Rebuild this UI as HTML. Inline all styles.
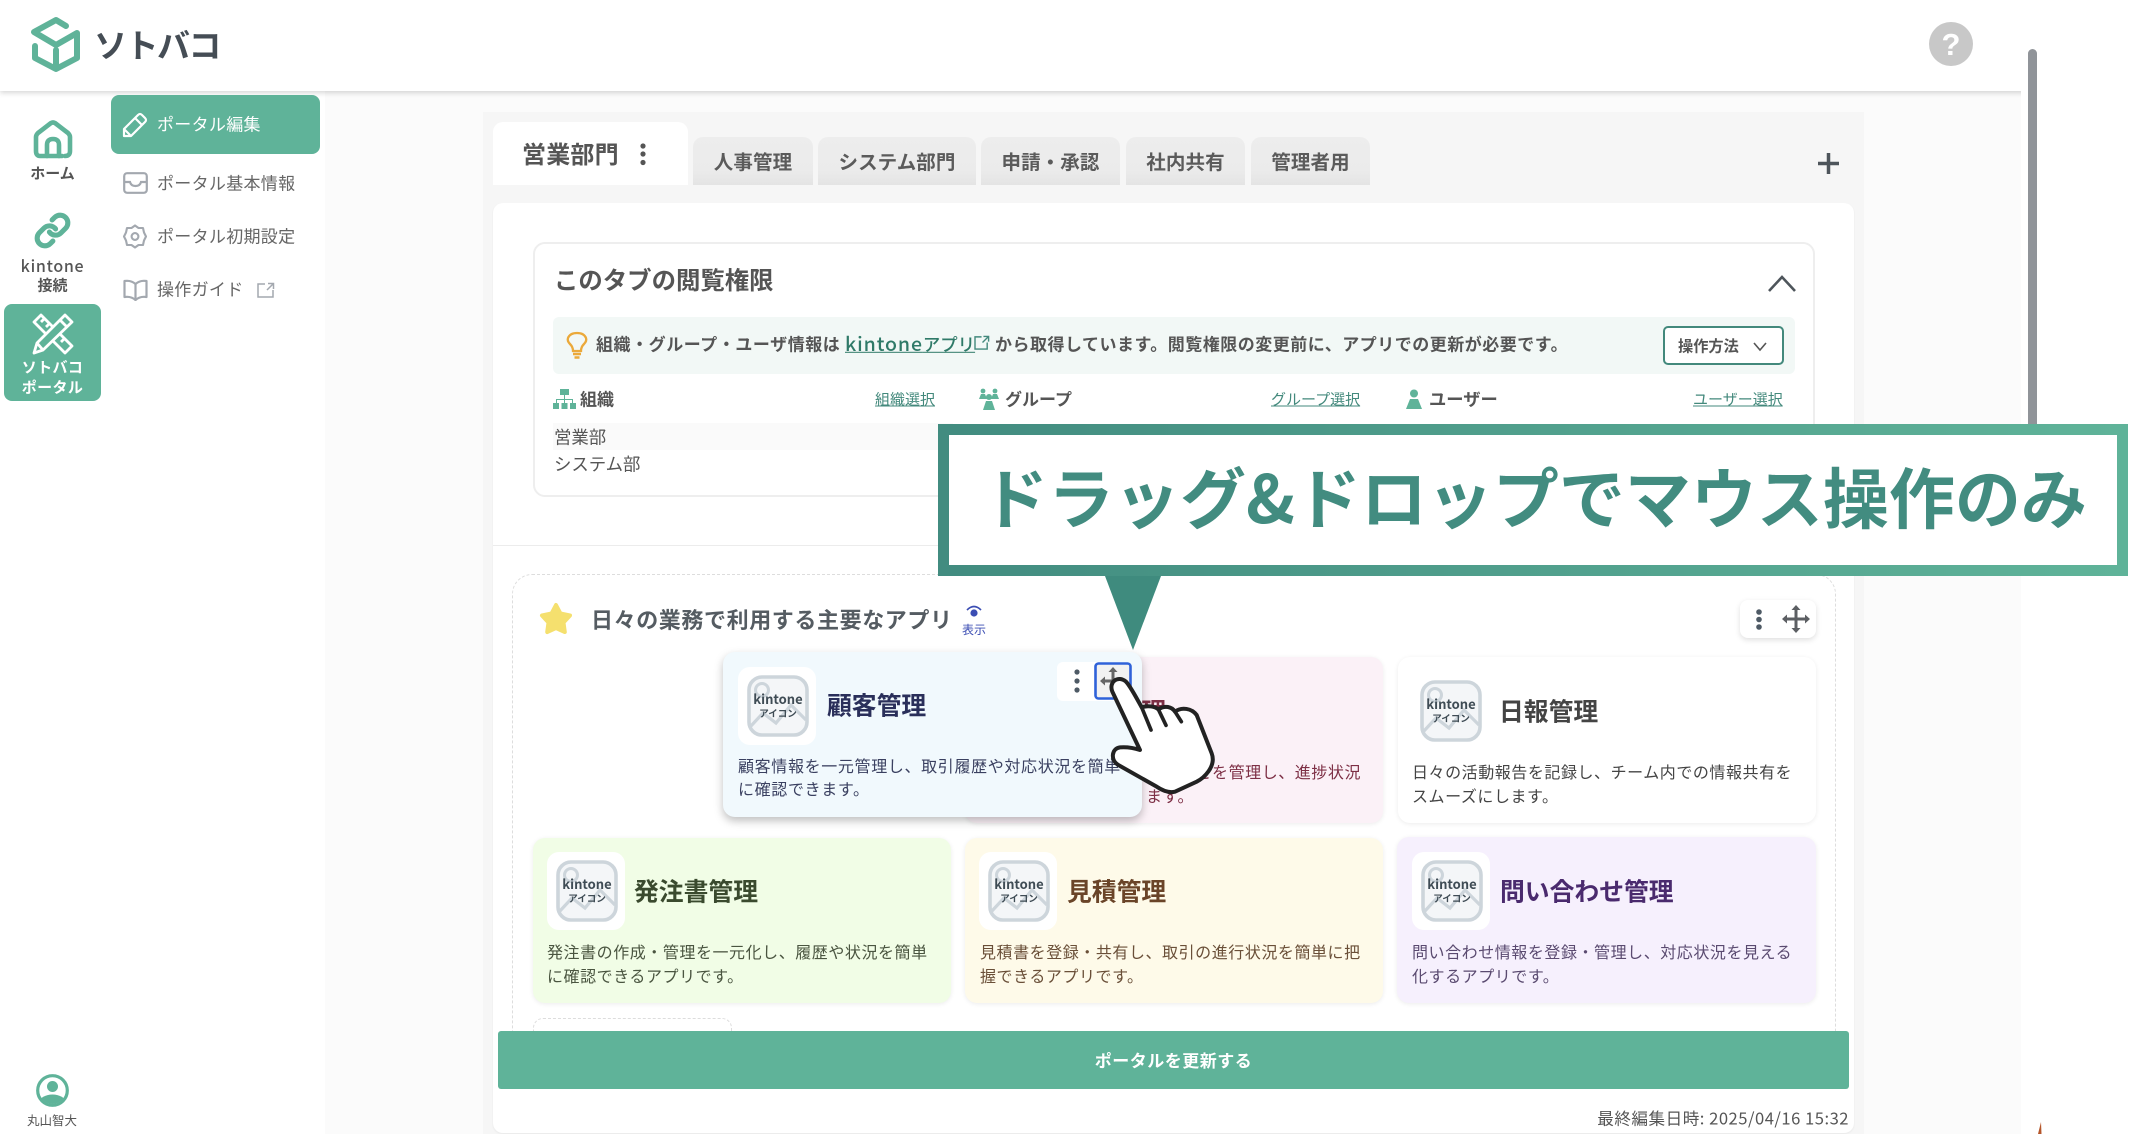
<!DOCTYPE html>
<html lang="ja">
<head>
<meta charset="utf-8">
<title>ソトバコポータル</title>
<style>
html,body{margin:0;padding:0;background:#fff}
body{width:2144px;height:1134px;overflow:hidden;position:relative;font-family:"Noto Sans CJK JP","Liberation Sans",sans-serif;color:#555}
.a{position:absolute;white-space:nowrap}
.t{position:absolute;white-space:nowrap;line-height:1;transform:translateY(-50%)}
.b{font-weight:700}
.tab{position:absolute;top:137px;height:48px;background:linear-gradient(#ededed,#ebebeb 70%,#e4e4e4);border-radius:10px 10px 0 0;font-size:19.5px;font-weight:700;color:#5b5b5b;text-align:center;line-height:48px;letter-spacing:.1px}
.card{position:absolute;border-radius:12px;box-shadow:0 1px 5px rgba(0,0,0,.08)}
.ib{position:absolute;width:78px;height:78px;background:#fff;border-radius:12px}
.ib svg{position:absolute;left:9px;top:8px;width:62px;height:62px}
.ttl{position:absolute;white-space:nowrap;line-height:1;font-size:24.8px;font-weight:700;transform:translateY(-50%)}
.d{position:absolute;white-space:nowrap;font-size:16px;letter-spacing:.55px;line-height:1;transform:translateY(-50%)}
.lnk{position:absolute;white-space:nowrap;line-height:1;transform:translateY(-50%);font-size:15px;color:#43897c;text-decoration:underline}
.menu{position:absolute;left:158px;white-space:nowrap;font-size:17px;line-height:1;color:#666;letter-spacing:.3px;transform:translateY(-50%)}
.navt{position:absolute;left:0;width:105px;text-align:center;font-size:15px;font-weight:700;line-height:1;color:#555;transform:translateY(-50%);white-space:nowrap}
</style>
</head>
<body>
<!-- backgrounds -->
<div class="a" style="left:325px;top:90px;width:1696px;height:1044px;background:#fbfbfb"></div>
<div class="a" style="left:483px;top:112px;width:1381px;height:1022px;background:#f6f6f6"></div>
<div class="a" style="left:493px;top:203px;width:1361px;height:930px;background:#fff;border-radius:10px;box-shadow:0 1px 2px rgba(0,0,0,.06)"></div>

<!-- header -->
<div class="a" style="left:0;top:0;width:2036px;height:91px;background:#fff;box-shadow:0 2px 5px rgba(0,0,0,.16);clip-path:inset(0 15px -12px 0)"></div>
<svg class="a" style="left:28px;top:12px" width="60" height="64" viewBox="28 12 60 64" fill="none" stroke="#5fb399" stroke-width="6" stroke-linejoin="round" stroke-linecap="round">
<path d="M66 26 56 20 34 32 56 45 77 33V58L56 69 35 58V46"/><path d="M56 50V67"/>
</svg>
<div class="t b" style="left:94px;top:44px;font-size:33px;color:#454d55;letter-spacing:-1.5px">ソトバコ</div>
<svg class="a" style="left:1929px;top:22px" width="44" height="44" viewBox="0 0 44 44"><circle cx="22" cy="22" r="22" fill="#c8c8c8"/><text x="22" y="33" font-family="'Liberation Sans',sans-serif" font-weight="700" font-size="31" text-anchor="middle" fill="#fff">?</text></svg>

<!-- scrollbar -->
<div class="a" style="left:2028px;top:49px;width:9px;height:390px;background:#909499;border-radius:5px 5px 0 0"></div>
<svg class="a" style="left:2036px;top:1122px" width="8" height="12"><path d="M2 12 3.5 6 5 0 5.5 12Z" fill="#b5562a"/></svg>

<!-- left rail -->
<svg class="a" style="left:32px;top:120px" width="42" height="40" viewBox="0 0 42 40" fill="none" stroke="#5fb399" stroke-width="4.6" stroke-linecap="round" stroke-linejoin="round">
<path d="M30 36H8Q4 36 4 31V17Q4 15 6 13L19 3Q21 2 23 3L36 13Q38 15 38 17V31Q38 36 33 36"/><path d="M15 36V25Q15 19 21 19 27 19 27 25V36"/>
</svg>
<div class="navt" style="top:173px">ホーム</div>
<svg class="a" style="left:34px;top:212px" width="37" height="37" viewBox="0 0 24 24" fill="none" stroke="#5fb399" stroke-width="3.3" stroke-linecap="round" stroke-linejoin="round">
<path d="M10 13a5 5 0 0 0 7.54.54l3-3a5 5 0 0 0-7.07-7.07l-1.72 1.71"/><path d="M14 11a5 5 0 0 0-7.54-.54l-3 3a5 5 0 0 0 7.07 7.07l1.71-1.71"/>
</svg>
<div class="navt" style="top:265px;font-size:16px;letter-spacing:.7px;font-weight:500">kintone</div>
<div class="navt" style="top:285px">接続</div>
<div class="a" style="left:4px;top:304px;width:97px;height:97px;background:#5fb399;border-radius:8px"></div>
<svg class="a" style="left:31px;top:313px" width="44" height="42" viewBox="0 0 44 42" fill="none" stroke="#fff" stroke-width="2.8" stroke-linejoin="round">
<path d="M3 9 10 2 41 33 34 40Z"/><path d="M10 9 14 5M15 14 19 10M25 24 29 20M30 29 34 25"/>
<path d="M34 2 41 9 12 37 3 40 6 30Z" fill="#5fb399"/><path d="M29 7 36 14M6 30 12 37"/>
</svg>
<div class="navt" style="top:367px;color:#fff;letter-spacing:.4px">ソトバコ</div>
<div class="navt" style="top:387px;color:#fff;letter-spacing:.4px">ポータル</div>
<svg class="a" style="left:36px;top:1074px" width="33" height="33" viewBox="0 0 33 33"><defs><clipPath id="uc"><circle cx="16.5" cy="16.5" r="13.5"/></clipPath></defs><circle cx="16.5" cy="16.5" r="14.8" fill="#fff" stroke="#5fb399" stroke-width="3.2"/><circle cx="16.5" cy="12.5" r="5.5" fill="#5fb399"/><ellipse cx="16.5" cy="28" rx="13" ry="7.5" fill="#5fb399" clip-path="url(#uc)"/></svg>
<div class="t" style="left:27px;top:1120px;font-size:12.5px;color:#555">丸山智大</div>

<!-- menu -->
<div class="a" style="left:111px;top:95px;width:209px;height:59px;background:#5fb399;border-radius:8px"></div>
<svg class="a" style="left:122px;top:112px" width="26" height="26" viewBox="0 0 26 26" fill="none" stroke="#fff" stroke-width="2.2" stroke-linejoin="round"><path d="M2 24V17L16 3Q18 1 20 3L23 6Q25 8 23 10L9 24Z"/><path d="M13 6 20 13M9 24 2 17"/></svg>
<div class="menu" style="top:122.5px;left:157px;color:#fff">ポータル編集</div>
<svg class="a" style="left:123px;top:172px" width="25" height="22" viewBox="0 0 25 22" fill="none" stroke="#a3a8af" stroke-width="2.2"><rect x="1.2" y="1.2" width="22.6" height="19.6" rx="3"/><path d="M1.2 10H7Q8 14 12.5 14 17 14 18 10H23.8"/></svg>
<div class="menu" style="top:181.5px;left:157px">ポータル基本情報</div>
<svg class="a" style="left:123px;top:224px" width="24" height="25" viewBox="0 0 24 25" fill="none" stroke="#a3a8af" stroke-width="2.1"><path d="M12 1.5 15.5 4 20 4 21 8.5 23 12.5 21 16.5 20 21 15.5 21 12 23.5 8.5 21 4 21 3 16.5 1 12.5 3 8.5 4 4 8.5 4Z" stroke-linejoin="round"/><circle cx="12" cy="12.5" r="3.4"/></svg>
<div class="menu" style="top:235px;left:157px">ポータル初期設定</div>
<svg class="a" style="left:123px;top:279px" width="25" height="22" viewBox="0 0 25 22" fill="none" stroke="#a3a8af" stroke-width="2.2" stroke-linejoin="round"><path d="M12.5 5Q8 1 1.5 2V18Q8 17 12.5 21 17 17 23.5 18V2Q17 1 12.5 5ZM12.5 5V21"/></svg>
<div class="menu" style="top:288px;left:157px">操作ガイド</div>
<svg class="a" style="left:257px;top:282px" width="18" height="16" viewBox="0 0 18 16" fill="none" stroke="#a3a8af" stroke-width="1.5"><path d="M8 2H1V15H16V8M10 8 16 2M11 1.5H16.5V7"/></svg>

<!-- tabs -->
<div class="a" style="left:493px;top:122px;width:195px;height:63px;background:#fff;border-radius:10px 10px 0 0"></div>
<div class="t b" style="left:522px;top:153px;font-size:24px;color:#555;letter-spacing:.2px">営業部門</div>
<svg class="a" style="left:639px;top:142px" width="8" height="24"><circle cx="4" cy="4" r="2.6" fill="#555"/><circle cx="4" cy="12" r="2.6" fill="#555"/><circle cx="4" cy="20.5" r="2.6" fill="#555"/></svg>
<div class="tab" style="left:693px;width:120px">人事管理</div>
<div class="tab" style="left:818px;width:158px">システム部門</div>
<div class="tab" style="left:981px;width:139px">申請・承認</div>
<div class="tab" style="left:1126px;width:119px">社内共有</div>
<div class="tab" style="left:1251px;width:119px">管理者用</div>
<svg class="a" style="left:1818px;top:153px" width="21" height="21"><path d="M10.5 0V21M0 10.5H21" stroke="#4e555b" stroke-width="3.5"/></svg>

<!-- permission card -->
<div class="a" style="left:533px;top:242px;width:1282px;height:255px;box-sizing:border-box;border:2px solid #eee;border-radius:12px;background:#fff"></div>
<div class="t b" style="left:554px;top:280px;font-size:24.4px;color:#555">このタブの閲覧権限</div>
<svg class="a" style="left:1767px;top:274px" width="30" height="19" fill="none" stroke="#4e555b" stroke-width="2.6"><path d="M2 17 15 3 28 17"/></svg>
<div class="a" style="left:553px;top:317px;width:1242px;height:57px;background:#f2f8f6;border-radius:6px"></div>
<svg class="a" style="left:565px;top:331px" width="24" height="28" viewBox="0 0 24 28" fill="none" stroke="#eba93a" stroke-width="2.3"><path d="M8 20Q8 16 5 13 2 10 3 7 5 2 12 2 19 2 21 7 22 10 19 13 16 16 16 20Z"/><path d="M8 23H16M9.5 26.5H14.5" stroke-width="2.6"/></svg>
<div class="t b" style="left:596px;top:343px;font-size:17px;color:#555;letter-spacing:.55px">組織・グループ・ユーザ情報は</div>
<div class="t" style="left:845px;top:343px;color:#2f7a68;text-decoration:underline;font-weight:500;font-size:17.4px"><span style="font-size:19.5px;letter-spacing:.9px">kintone</span>アプリ</div>
<svg class="a" style="left:974px;top:335px" width="17" height="15" viewBox="0 0 18 16" fill="none" stroke="#43897c" stroke-width="1.5"><path d="M8 2H1V15H14V8M9 8 15 2M10 1.5H15.5V7"/></svg>
<div class="t b" style="left:995px;top:343px;font-size:17px;color:#555;letter-spacing:.5px">から取得しています。閲覧権限の変更前に、アプリでの更新が必要です。</div>
<div class="a" style="left:1663px;top:326px;width:121px;height:39px;box-sizing:border-box;border:2px solid #43897c;border-radius:5px;background:#fff"></div>
<div class="t b" style="left:1678px;top:346px;font-size:15.2px;color:#555">操作方法</div>
<svg class="a" style="left:1752px;top:341px" width="16" height="11" fill="none" stroke="#555" stroke-width="1.6"><path d="M2 2 8 9 14 2"/></svg>

<svg class="a" style="left:553px;top:389px" width="23" height="21" viewBox="0 0 23 21" fill="#5fb399"><rect x="7" y="0" width="9" height="6"/><rect x="0" y="14" width="6" height="6"/><rect x="8.5" y="14" width="6" height="6"/><rect x="17" y="14" width="6" height="6"/><path d="M11 6h1v4h8v4h-1v-3h-7v3h-1v-3H4v3H3v-4h8z"/></svg>
<div class="t b" style="left:580px;top:398px;font-size:17px;color:#555">組織</div>
<div class="lnk" style="left:875px;top:399px">組織選択</div>
<svg class="a" style="left:978px;top:388px" width="22" height="22" viewBox="0 0 22 22" fill="#5fb399"><circle cx="5" cy="3" r="2.4"/><circle cx="17" cy="3" r="2.4"/><path d="M3 6h4l2 5H1ZM15 6h4l2 5h-8Z"/><circle cx="11" cy="9" r="3"/><path d="M8 13h6l3 9H5Z"/></svg>
<div class="t b" style="left:1005px;top:398px;font-size:17px;color:#555">グループ</div>
<div class="lnk" style="left:1271px;top:399px">グループ選択</div>
<svg class="a" style="left:1405px;top:389px" width="18" height="20" viewBox="0 0 18 20" fill="#5fb399"><circle cx="9" cy="4.5" r="4"/><path d="M5 10h8l4 10H1Z"/></svg>
<div class="t b" style="left:1429px;top:398px;font-size:17.3px;color:#555">ユーザー</div>
<div class="lnk" style="left:1693px;top:399px">ユーザー選択</div>
<div class="a" style="left:553px;top:423px;width:400px;height:27px;background:#fafafa"></div>
<div class="t" style="left:554px;top:437px;font-size:17.4px;color:#555">営業部</div>
<div class="t" style="left:554px;top:463.5px;font-size:17.4px;color:#555">システム部</div>

<div class="a" style="left:493px;top:545px;width:1361px;height:1px;background:#ececec"></div>

<!-- section -->
<div class="a" style="left:512px;top:574px;width:1324px;height:470px;box-sizing:border-box;border:1.5px dashed #ddd;border-bottom:0;border-radius:20px 20px 0 0"></div>
<svg class="a" style="left:539px;top:602px" width="34" height="33" viewBox="0 0 34 33"><path d="M17 3 21.5 11.5 31 13.5 24.5 20.5 25.8 30 17 26 8.2 30 9.5 20.5 3 13.5 12.5 11.5Z" fill="#f5e06e" stroke="#f5e06e" stroke-width="4" stroke-linejoin="round"/></svg>
<div class="t b" style="left:591px;top:619px;font-size:22px;color:#555c62;letter-spacing:.6px">日々の業務で利用する主要なアプリ</div>
<svg class="a" style="left:965px;top:604px" width="18" height="14" viewBox="0 0 18 14" fill="#3b4db3"><circle cx="9" cy="9" r="3.6"/><path d="M2 6Q9 -1 16 6" fill="none" stroke="#3b4db3" stroke-width="1.7"/></svg>
<div class="t" style="left:962px;top:630px;font-size:12px;color:#3b4db3">表示</div>
<div class="a" style="left:1740px;top:600px;width:76px;height:38px;background:#fff;border-radius:8px;box-shadow:0 2px 6px rgba(0,0,0,.13)"></div>
<svg class="a" style="left:1740px;top:600px" width="76" height="38" viewBox="0 0 76 38"><g fill="#4e5a65"><circle cx="19" cy="12" r="2.8"/><circle cx="19" cy="19.5" r="2.8"/><circle cx="19" cy="27" r="2.8"/></g><path d="M56 8V30M45 19H67" stroke="#5c5f63" stroke-width="3"/><path d="M56 5 60.5 10H51.5ZM56 33 60.5 28H51.5ZM42 19 47 14.5V23.5ZM70 19 65 14.5V23.5Z" fill="#5c5f63"/></svg>

<!-- pink card -->
<div class="card" style="left:965px;top:657px;width:418px;height:166px;background:#fbf1f7"></div>
<div class="ttl" style="left:1067px;top:711px;color:#7d2f45">請求管理</div>
<div class="d" style="left:1030px;top:770.5px;color:#7d2f45">請求情報や入金状況などを管理し、進捗状況</div>
<div class="d" style="left:1146px;top:795px;color:#7d2f45">ます。</div>

<!-- dragged card -->
<div class="card" style="left:723px;top:652px;width:419px;height:165px;background:#f1f9fd;box-shadow:0 4px 9px rgba(0,0,0,.25)"></div>
<div class="ib" style="left:738px;top:667px"><svg viewBox="0 0 62 62"><rect x="2" y="2" width="58" height="58" rx="13" fill="#f4f6f8" stroke="#cdd5db" stroke-width="3.6"/><path d="M3 52 16 38 29 48 44 30 59 45" fill="none" stroke="#cdd5db" stroke-width="3.2"/><circle cx="15" cy="15" r="6.5" fill="none" stroke="#cdd5db" stroke-width="3"/><text x="31" y="29" text-anchor="middle" font-size="13" font-weight="700" fill="#3f4c55" font-family="'Noto Sans CJK JP',sans-serif">kintone</text><text x="31" y="42" text-anchor="middle" font-size="9.5" font-weight="700" fill="#3f4c55" font-family="'Noto Sans CJK JP',sans-serif">アイコン</text></svg></div>
<div class="ttl" style="left:827px;top:705px;color:#2a2f5a">顧客管理</div>
<div class="d" style="left:738px;top:764.5px;color:#3a4060;letter-spacing:.65px">顧客情報を一元管理し、取引履歴や対応状況を簡単</div>
<div class="d" style="left:738px;top:788px;color:#3a4060;letter-spacing:.65px">に確認できます。</div>
<div class="a" style="left:1057px;top:662px;width:75px;height:39px;background:#fff;border-radius:6px"></div>
<svg class="a" style="left:1057px;top:662px" width="75" height="39" viewBox="0 0 75 39"><g fill="#4e5a65"><circle cx="20" cy="10" r="2.6"/><circle cx="20" cy="19" r="2.6"/><circle cx="20" cy="28" r="2.6"/></g><rect x="38.5" y="1.5" width="35" height="35" rx="3" fill="#f2f2f2" stroke="#2f62d9" stroke-width="2.6"/><path d="M56 9V29M46 19H66" stroke="#666" stroke-width="3"/><path d="M56 5 60.5 10H51.5ZM43 19 48 14.5V23.5Z" fill="#666"/></svg>

<!-- white card -->
<div class="card" style="left:1398px;top:657px;width:418px;height:166px;background:#fff"></div>
<div class="ib" style="left:1411px;top:672px;background:none"><svg viewBox="0 0 62 62"><rect x="2" y="2" width="58" height="58" rx="13" fill="#f4f6f8" stroke="#cdd5db" stroke-width="3.6"/><path d="M3 52 16 38 29 48 44 30 59 45" fill="none" stroke="#cdd5db" stroke-width="3.2"/><circle cx="15" cy="15" r="6.5" fill="none" stroke="#cdd5db" stroke-width="3"/><text x="31" y="29" text-anchor="middle" font-size="13" font-weight="700" fill="#3f4c55" font-family="'Noto Sans CJK JP',sans-serif">kintone</text><text x="31" y="42" text-anchor="middle" font-size="9.5" font-weight="700" fill="#3f4c55" font-family="'Noto Sans CJK JP',sans-serif">アイコン</text></svg></div>
<div class="ttl" style="left:1499px;top:711px;color:#444">日報管理</div>
<div class="d" style="left:1412px;top:770.5px;color:#444">日々の活動報告を記録し、チーム内での情報共有を</div>
<div class="d" style="left:1412px;top:794.5px;color:#444">スムーズにします。</div>

<!-- row 2 -->
<div class="card" style="left:533px;top:838px;width:418px;height:165px;background:#f1fde6"></div>
<div class="ib" style="left:547px;top:852px"><svg viewBox="0 0 62 62"><rect x="2" y="2" width="58" height="58" rx="13" fill="#f4f6f8" stroke="#cdd5db" stroke-width="3.6"/><path d="M3 52 16 38 29 48 44 30 59 45" fill="none" stroke="#cdd5db" stroke-width="3.2"/><circle cx="15" cy="15" r="6.5" fill="none" stroke="#cdd5db" stroke-width="3"/><text x="31" y="29" text-anchor="middle" font-size="13" font-weight="700" fill="#3f4c55" font-family="'Noto Sans CJK JP',sans-serif">kintone</text><text x="31" y="42" text-anchor="middle" font-size="9.5" font-weight="700" fill="#3f4c55" font-family="'Noto Sans CJK JP',sans-serif">アイコン</text></svg></div>
<div class="ttl" style="left:634px;top:891px;color:#3a4a2e">発注書管理</div>
<div class="d" style="left:547px;top:950.5px;color:#4a5540">発注書の作成・管理を一元化し、履歴や状況を簡単</div>
<div class="d" style="left:547px;top:974.5px;color:#4a5540">に確認できるアプリです。</div>

<div class="card" style="left:965px;top:838px;width:418px;height:165px;background:#fefae9"></div>
<div class="ib" style="left:979px;top:852px"><svg viewBox="0 0 62 62"><rect x="2" y="2" width="58" height="58" rx="13" fill="#f4f6f8" stroke="#cdd5db" stroke-width="3.6"/><path d="M3 52 16 38 29 48 44 30 59 45" fill="none" stroke="#cdd5db" stroke-width="3.2"/><circle cx="15" cy="15" r="6.5" fill="none" stroke="#cdd5db" stroke-width="3"/><text x="31" y="29" text-anchor="middle" font-size="13" font-weight="700" fill="#3f4c55" font-family="'Noto Sans CJK JP',sans-serif">kintone</text><text x="31" y="42" text-anchor="middle" font-size="9.5" font-weight="700" fill="#3f4c55" font-family="'Noto Sans CJK JP',sans-serif">アイコン</text></svg></div>
<div class="ttl" style="left:1067px;top:891px;color:#6a4428">見積管理</div>
<div class="d" style="left:980px;top:950.5px;color:#6a4f38">見積書を登録・共有し、取引の進行状況を簡単に把</div>
<div class="d" style="left:980px;top:974.5px;color:#6a4f38">握できるアプリです。</div>

<div class="card" style="left:1397px;top:837px;width:419px;height:166px;background:#f6f0fd"></div>
<div class="ib" style="left:1412px;top:852px"><svg viewBox="0 0 62 62"><rect x="2" y="2" width="58" height="58" rx="13" fill="#f4f6f8" stroke="#cdd5db" stroke-width="3.6"/><path d="M3 52 16 38 29 48 44 30 59 45" fill="none" stroke="#cdd5db" stroke-width="3.2"/><circle cx="15" cy="15" r="6.5" fill="none" stroke="#cdd5db" stroke-width="3"/><text x="31" y="29" text-anchor="middle" font-size="13" font-weight="700" fill="#3f4c55" font-family="'Noto Sans CJK JP',sans-serif">kintone</text><text x="31" y="42" text-anchor="middle" font-size="9.5" font-weight="700" fill="#3f4c55" font-family="'Noto Sans CJK JP',sans-serif">アイコン</text></svg></div>
<div class="ttl" style="left:1500px;top:891px;color:#4a2a6e">問い合わせ管理</div>
<div class="d" style="left:1412px;top:950.5px;color:#5a4a70">問い合わせ情報を登録・管理し、対応状況を見える</div>
<div class="d" style="left:1412px;top:974.5px;color:#5a4a70">化するアプリです。</div>

<div class="a" style="left:533px;top:1018px;width:199px;height:30px;box-sizing:border-box;border:1.5px dashed #ddd;border-bottom:0;border-radius:10px 10px 0 0"></div>

<!-- update button -->
<div class="a" style="left:498px;top:1031px;width:1351px;height:58px;background:#5fb399;border-radius:3px;color:#fff;font-size:17px;font-weight:700;text-align:center;line-height:58px;letter-spacing:.5px">ポータルを更新する</div>
<div class="t" style="right:295px;top:1118px;font-size:16.6px;color:#555;letter-spacing:.5px">最終編集日時: 2025/04/16 15:32</div>

<!-- banner -->
<svg class="a" style="left:1105px;top:560px" width="56" height="90"><path d="M0 16H56L28 90Z" fill="#3f8b7e"/></svg>
<div class="a" style="left:938px;top:424px;width:1190px;height:152px;box-sizing:border-box;border:11.5px solid;border-image:linear-gradient(90deg,#428c80,#5fb399) 1;background:#fff"></div>
<div class="t b" style="left:982px;top:495px;font-size:66px;color:#428c80;letter-spacing:0">ドラッグ&amp;ドロップでマウス操作のみ</div>

<!-- hand -->
<svg class="a" style="left:1040px;top:650px" width="220" height="170" viewBox="0 0 660 510"><path d="M300 300 217 125C205 95 235 75 258 95 268 105 285 135 305 172 325 165 345 170 355 178 375 165 395 170 405 185 425 170 455 175 470 195L515 310C530 350 490 385 470 395L405 425C385 430 365 420 350 410L235 345C210 330 215 295 240 292 265 290 285 295 300 300Z" fill="#fff" stroke="#222" stroke-width="12" stroke-linejoin="round"/><path d="M305 172 333 240M355 178 378 226M405 185 424 215" fill="none" stroke="#222" stroke-width="11" stroke-linecap="round"/></svg>
</body>
</html>
